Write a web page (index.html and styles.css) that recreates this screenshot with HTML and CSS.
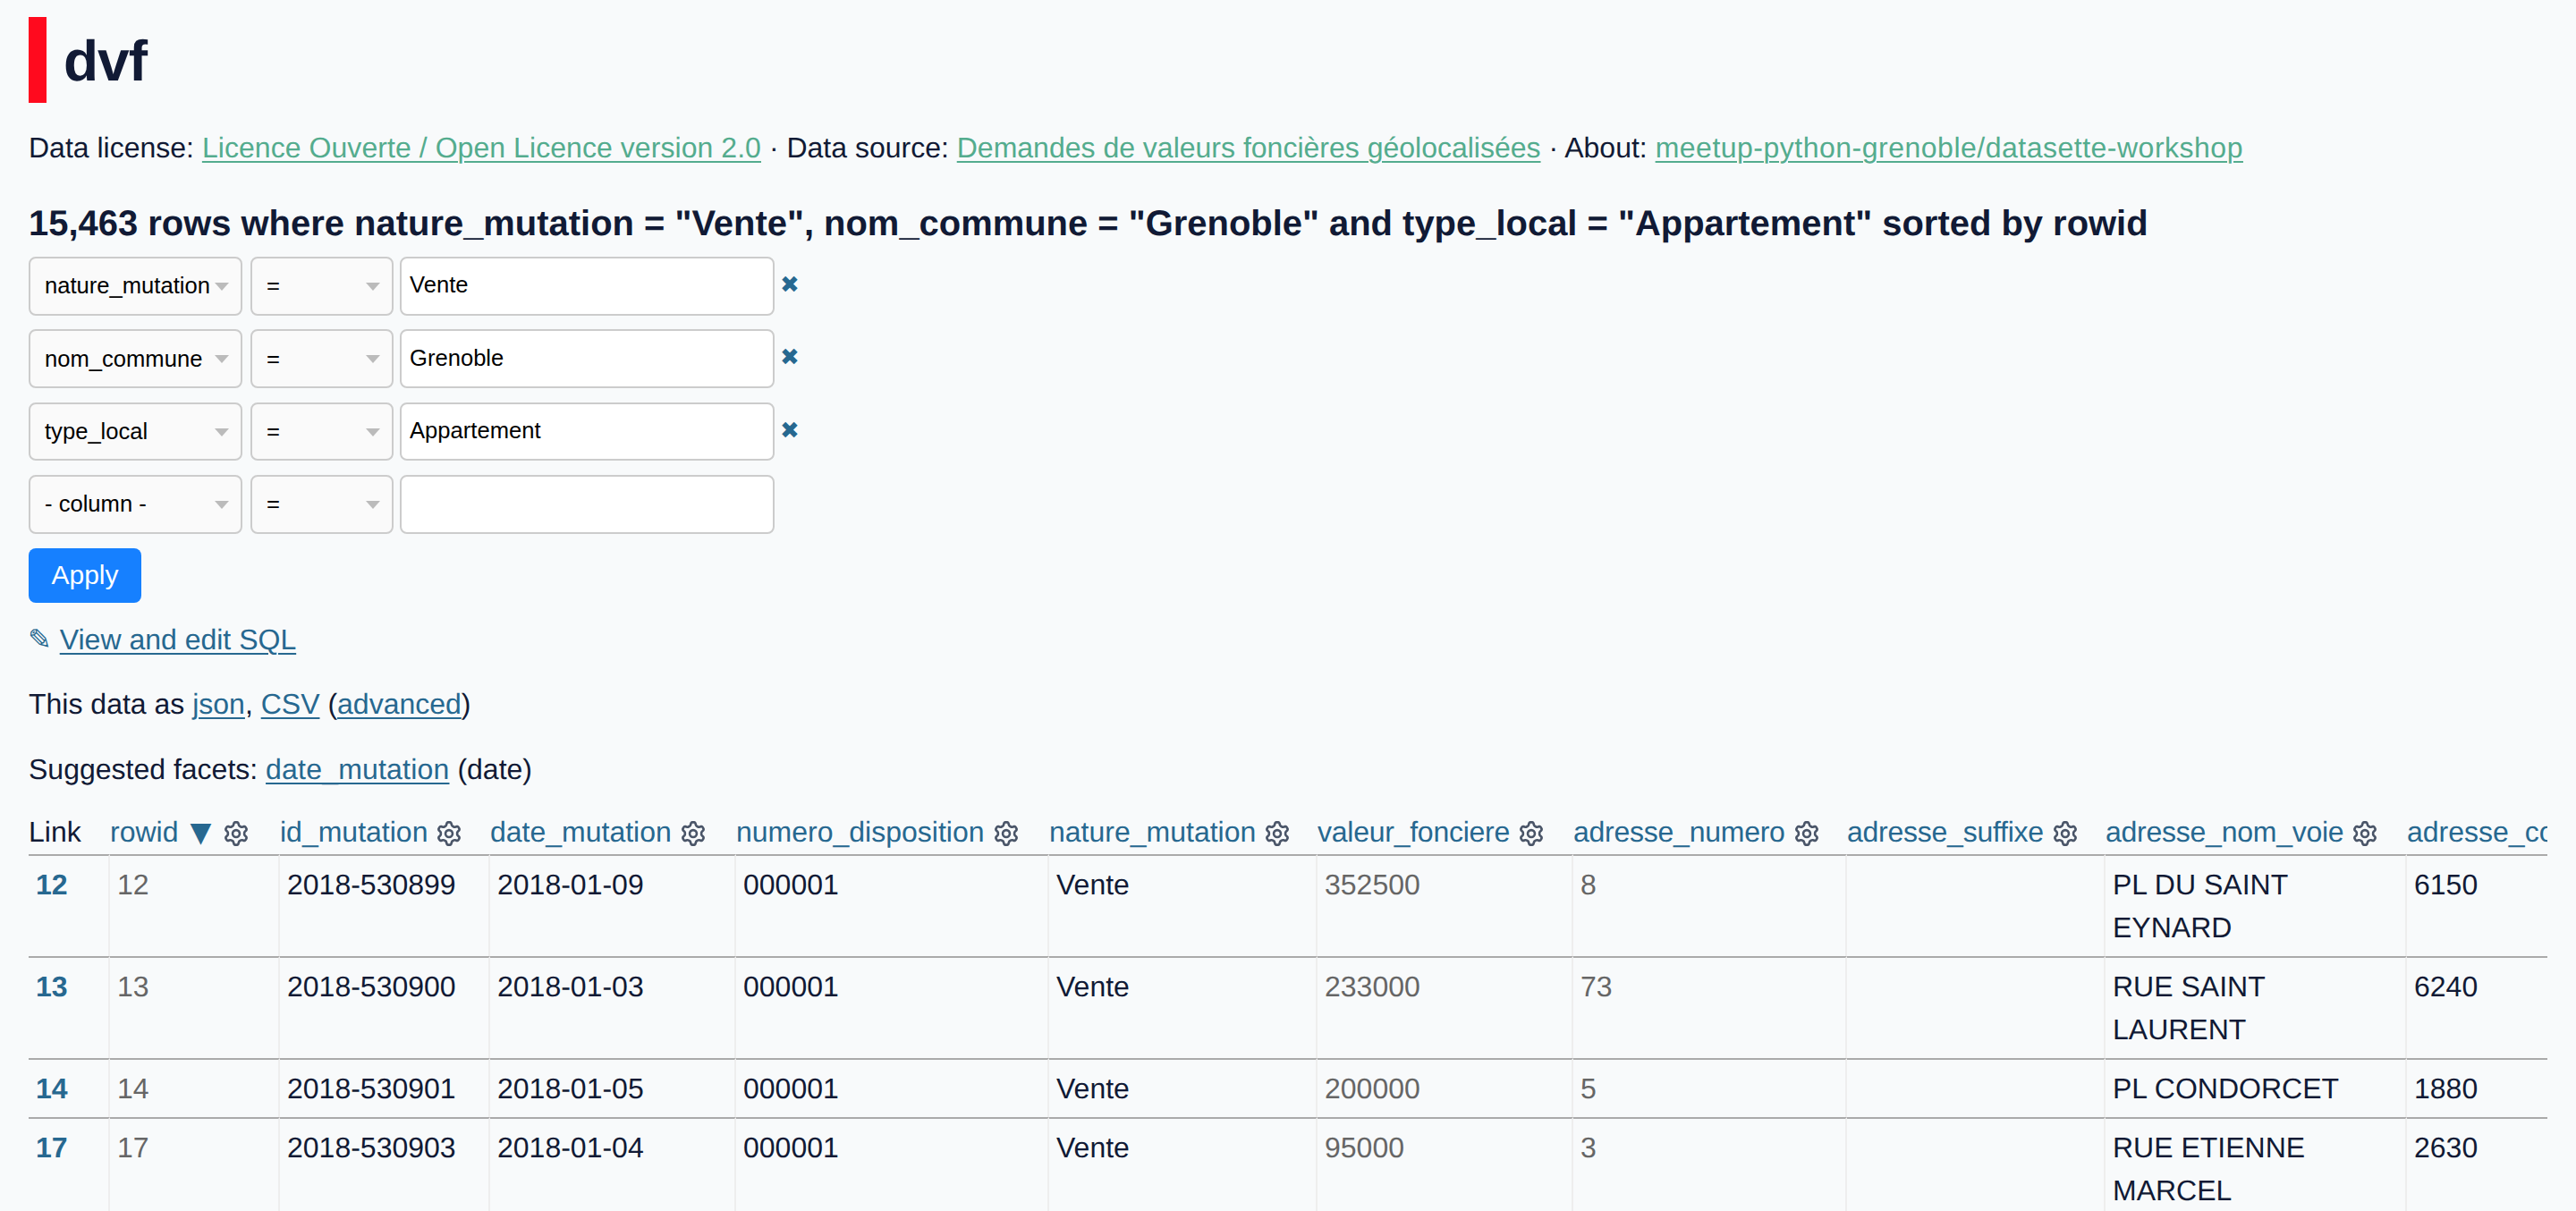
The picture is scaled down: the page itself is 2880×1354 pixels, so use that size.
FILE: index.html
```html
<!DOCTYPE html>
<html lang="en">
  <head>
    <meta charset="UTF-8" />
    <title>dvf: 15,463 rows</title>
    <link rel="stylesheet" href="styles.css">
  </head>

  <body>
    <svg class="sprite" width="0" height="0">
      <symbol id="gear" viewBox="0 0 16 16">
        <path fill-rule="evenodd" d="M7.429 1.525a6.593 6.593 0 011.142 0c.036.003.108.036.137.146l.289 1.105c.147.56.55.967.997 1.189.174.086.341.183.501.29.417.278.97.423 1.53.27l1.102-.303c.11-.03.175.016.195.046.219.31.41.641.573.989.014.031.022.11-.059.19l-.815.806c-.411.406-.562.957-.53 1.456a4.588 4.588 0 010 .582c-.032.499.119 1.05.53 1.456l.815.806c.08.08.073.159.059.19a6.494 6.494 0 01-.573.99c-.02.029-.086.074-.195.045l-1.103-.303c-.559-.153-1.112-.008-1.529.27-.16.107-.327.204-.5.29-.449.222-.851.628-.998 1.189l-.289 1.105c-.029.11-.101.143-.137.146a6.613 6.613 0 01-1.142 0c-.036-.003-.108-.037-.137-.146l-.289-1.105c-.147-.56-.55-.967-.997-1.189a4.502 4.502 0 01-.501-.29c-.417-.278-.97-.423-1.53-.27l-1.102.303c-.11.03-.175-.016-.195-.046a6.492 6.492 0 01-.573-.989c-.014-.031-.022-.11.059-.19l.815-.806c.411-.406.562-.957.53-1.456a4.587 4.587 0 010-.582c.032-.499-.119-1.05-.53-1.456l-.815-.806c-.08-.08-.073-.159-.059-.19a6.44 6.44 0 01.573-.99c.02-.029.086-.075.195-.045l1.103.303c.559.153 1.112.008 1.529-.27.16-.107.327-.204.5-.29.449-.222.851-.628.998-1.189l.289-1.105c.029-.11.101-.143.137-.146zM8 0c-.236 0-.47.01-.701.03-.743.065-1.29.615-1.458 1.261l-.29 1.106c-.017.066-.078.158-.211.224a5.994 5.994 0 00-.668.386c-.123.082-.233.09-.3.071L3.27 2.776c-.644-.177-1.392.02-1.82.63a7.977 7.977 0 00-.704 1.217c-.315.675-.111 1.422.363 1.891l.815.806c.05.048.098.147.088.294a6.084 6.084 0 000 .772c.01.147-.038.246-.088.294l-.815.806c-.474.469-.678 1.216-.363 1.891.2.428.436.835.704 1.218.428.609 1.176.806 1.82.63l1.103-.303c.066-.019.176-.011.299.071.213.143.436.272.668.386.133.066.194.158.212.224l.289 1.106c.169.646.715 1.196 1.458 1.26a8.094 8.094 0 001.402 0c.743-.064 1.29-.614 1.458-1.26l.29-1.106c.017-.066.078-.158.211-.224a5.98 5.98 0 00.668-.386c.123-.082.233-.09.3-.071l1.102.302c.644.177 1.392-.02 1.82-.63.268-.382.505-.789.704-1.217.315-.675.111-1.422-.364-1.891l-.814-.806c-.05-.048-.098-.147-.088-.294a6.1 6.1 0 000-.772c-.01-.147.039-.246.088-.294l.814-.806c.475-.469.679-1.216.364-1.891a7.992 7.992 0 00-.704-1.218c-.428-.609-1.176-.806-1.82-.63l-1.103.303c-.066.019-.176.011-.299-.071a5.991 5.991 0 00-.668-.386c-.133-.066-.194-.158-.212-.224L10.16 1.29C9.99.645 9.444.095 8.701.031A8.094 8.094 0 008 0zm1.5 8a1.5 1.5 0 11-3 0 1.5 1.5 0 013 0zM11 8a3 3 0 11-6 0 3 3 0 016 0z"/>
      </symbol>
    </svg>

    <h1 class="db-title">dvf</h1>

    <p class="meta">
      Data license: <a class="green wide-a" href="#">Licence Ouverte / Open Licence version 2.0</a> ·
      Data source: <a class="green" href="#">Demandes de valeurs foncières géolocalisées</a> ·
      About: <a class="green wide-b" href="#">meetup-python-grenoble/datasette-workshop</a>
    </p>

    <h3 class="count">15,463 rows where nature_mutation = "Vente", nom_commune = "Grenoble" and type_local = "Appartement" sorted by rowid</h3>

    <form class="filters">
      <div class="filter-row">
        <div class="select-wrap col-select"><select><option>nature_mutation</option></select></div>
        <div class="select-wrap op-select"><select><option>=</option></select></div>
        <input class="filter-value" type="text" value="Vente" />
        <a class="remove" href="#">✖</a>
      </div>
      <div class="filter-row">
        <div class="select-wrap col-select"><select><option>nom_commune</option></select></div>
        <div class="select-wrap op-select"><select><option>=</option></select></div>
        <input class="filter-value" type="text" value="Grenoble" />
        <a class="remove" href="#">✖</a>
      </div>
      <div class="filter-row">
        <div class="select-wrap col-select"><select><option>type_local</option></select></div>
        <div class="select-wrap op-select"><select><option>=</option></select></div>
        <input class="filter-value" type="text" value="Appartement" />
        <a class="remove" href="#">✖</a>
      </div>
      <div class="filter-row">
        <div class="select-wrap col-select"><select><option>- column -</option></select></div>
        <div class="select-wrap op-select"><select><option>=</option></select></div>
        <input class="filter-value" type="text" value="" />
      </div>
      <button class="apply" type="button">Apply</button>
    </form>

    <p class="line sql"><span class="pencil">✎</span> <a href="#">View and edit SQL</a></p>
    <p class="line">This data as <a href="#">json</a>, <a href="#">CSV</a> (<a href="#">advanced</a>)</p>
    <p class="line">Suggested facets: <a class="facet" href="#">date_mutation</a> (date)</p>

    <div class="table-wrap">
      <table class="rows">
        <colgroup>
          <col class="w-link" /><col class="w-rowid" /><col class="w-id" /><col class="w-date" />
          <col class="w-disp" /><col class="w-nature" /><col class="w-valeur" /><col class="w-num" />
          <col class="w-suffixe" /><col class="w-voie" /><col class="w-code" />
        </colgroup>
        <thead>
          <tr>
            <th>Link</th>
            <th><a href="#">rowid<span class="sort">▼</span></a><svg class="gear"><use href="#gear" /></svg></th>
            <th><a href="#">id_mutation</a><svg class="gear"><use href="#gear" /></svg></th>
            <th><a href="#">date_mutation</a><svg class="gear"><use href="#gear" /></svg></th>
            <th><a href="#">numero_disposition</a><svg class="gear"><use href="#gear" /></svg></th>
            <th><a href="#">nature_mutation</a><svg class="gear"><use href="#gear" /></svg></th>
            <th><a class="tight" href="#">valeur_fonciere</a><svg class="gear"><use href="#gear" /></svg></th>
            <th><a class="tight" href="#">adresse_numero</a><svg class="gear"><use href="#gear" /></svg></th>
            <th><a class="tight" href="#">adresse_suffixe</a><svg class="gear"><use href="#gear" /></svg></th>
            <th><a class="tight" href="#">adresse_nom_voie</a><svg class="gear"><use href="#gear" /></svg></th>
            <th><a href="#">adresse_code_voie</a></th>
          </tr>
        </thead>
        <tbody>
          <tr>
            <td class="pk"><a href="#">12</a></td><td class="num">12</td><td>2018-530899</td><td>2018-01-09</td><td>000001</td>
            <td>Vente</td><td class="num">352500</td><td class="num">8</td><td></td><td>PL DU SAINT EYNARD</td><td>6150</td>
          </tr>
          <tr>
            <td class="pk"><a href="#">13</a></td><td class="num">13</td><td>2018-530900</td><td>2018-01-03</td><td>000001</td>
            <td>Vente</td><td class="num">233000</td><td class="num">73</td><td></td><td>RUE SAINT LAURENT</td><td>6240</td>
          </tr>
          <tr>
            <td class="pk"><a href="#">14</a></td><td class="num">14</td><td>2018-530901</td><td>2018-01-05</td><td>000001</td>
            <td>Vente</td><td class="num">200000</td><td class="num">5</td><td></td><td>PL CONDORCET</td><td>1880</td>
          </tr>
          <tr>
            <td class="pk"><a href="#">17</a></td><td class="num">17</td><td>2018-530903</td><td>2018-01-04</td><td>000001</td>
            <td>Vente</td><td class="num">95000</td><td class="num">3</td><td></td><td>RUE ETIENNE MARCEL</td><td>2630</td>
          </tr>
        </tbody>
      </table>
    </div>
  </body>
</html>
```

FILE: styles.css
```css
html,
body {
  height: 100%;
  overflow: hidden;
}

body {
  margin: 0;
  padding: 19px 32px 0;
  box-sizing: border-box;
  background-color: #f8fafb;
  color: #111a35;
  font-family: "Liberation Sans", Arial, sans-serif;
  font-size: 32px;
  line-height: 48px;
  text-rendering: geometricPrecision;
}

.sprite {
  display: block;
  position: absolute;
}

a {
  color: #276890;
  text-decoration-thickness: 2px;
  text-underline-offset: 4px;
}

a.green {
  color: #54ac8e;
}

.wide-a {
  letter-spacing: 0.06px;
}

.wide-b {
  letter-spacing: 0.5px;
}

.facet {
  letter-spacing: 0.2px;
}

.tight {
  letter-spacing: -0.25px;
}

.db-title {
  margin: 0;
  height: 96px;
  box-sizing: border-box;
  border-left: 20px solid #ff0a1e;
  padding-left: 19px;
  font-size: 64px;
  line-height: 99px;
  letter-spacing: -1px;
}

.meta {
  margin: 26px 0 0;
}

.count {
  margin: 37px 0 0;
  font-size: 39.95px;
  line-height: 48px;
}

.filters {
  margin-top: 13px;
}

.filter-row {
  display: flex;
  align-items: flex-start;
  height: 65.6px;
  margin-bottom: 15.8px;
}

.select-wrap {
  position: relative;
  height: 100%;
}

.select-wrap::after {
  content: "";
  position: absolute;
  right: 15px;
  top: 29px;
  border-left: 8.5px solid transparent;
  border-right: 8.5px solid transparent;
  border-top: 9px solid #bbb;
  pointer-events: none;
}

.col-select {
  width: 239px;
  margin-right: 9px;
}

.op-select {
  width: 160px;
  margin-right: 7px;
}

select {
  appearance: none;
  width: 100%;
  height: 100%;
  box-sizing: border-box;
  border: 2px solid #ccc;
  border-radius: 8px;
  background-color: #fafafa;
  color: #000;
  font-family: inherit;
  font-size: 25.6px;
  padding: 0 0 1px 16px;
}

.filter-value {
  width: 419px;
  height: 100%;
  box-sizing: border-box;
  border: 2px solid #ccc;
  border-radius: 8px;
  background-color: #fff;
  color: #000;
  font-family: inherit;
  font-size: 25.6px;
  padding: 0 0 2px 9px;
}

.remove {
  margin-left: 6px;
  font-family: "DejaVu Sans", sans-serif;
  font-size: 26px;
  line-height: 64px;
  text-decoration: none;
}

.apply {
  display: block;
  width: 126px;
  height: 61px;
  border: none;
  border-radius: 8px;
  background-color: #1680ff;
  color: #fff;
  font-family: inherit;
  font-size: 30px;
  padding: 0;
}

.line {
  margin: 17.4px 0 0;
}

.line + .line {
  margin-top: 24.5px;
}

.pencil {
  margin-left: -1px;
  color: #276890;
  font-family: "DejaVu Sans", sans-serif;
}

.table-wrap {
  margin-top: 22px;
  width: 2816px;
  overflow: hidden;
}

.rows {
  table-layout: fixed;
  border-collapse: separate;
  border-spacing: 0;
  width: 2859px;
}

.w-link { width: 91px; }
.w-rowid { width: 190px; }
.w-id { width: 235px; }
.w-date { width: 275px; }
.w-disp { width: 350px; }
.w-nature { width: 300px; }
.w-valeur { width: 286px; }
.w-num { width: 306px; }
.w-suffixe { width: 289px; }
.w-voie { width: 337px; }
.w-code { width: 200px; }

.rows th {
  padding: 0;
  text-align: left;
  font-weight: normal;
  white-space: nowrap;
  overflow: hidden;
}

.rows th a {
  text-decoration: none;
}

.sort {
  margin: 0 4px 0 13px;
  font-family: "DejaVu Sans", sans-serif;
  font-size: 31px;
}

.gear {
  width: 28px;
  height: 28px;
  margin-left: 10px;
  vertical-align: -5px;
  fill: #4a5568;
}

.rows td {
  padding: 8px;
  border-top: 2px solid #aaa;
  border-right: 2px solid #eee;
  vertical-align: top;
}

.rows td:last-child {
  border-right: none;
}

.rows td.num {
  color: #666;
}

.rows td.pk a {
  font-weight: bold;
  text-decoration: none;
}
```
